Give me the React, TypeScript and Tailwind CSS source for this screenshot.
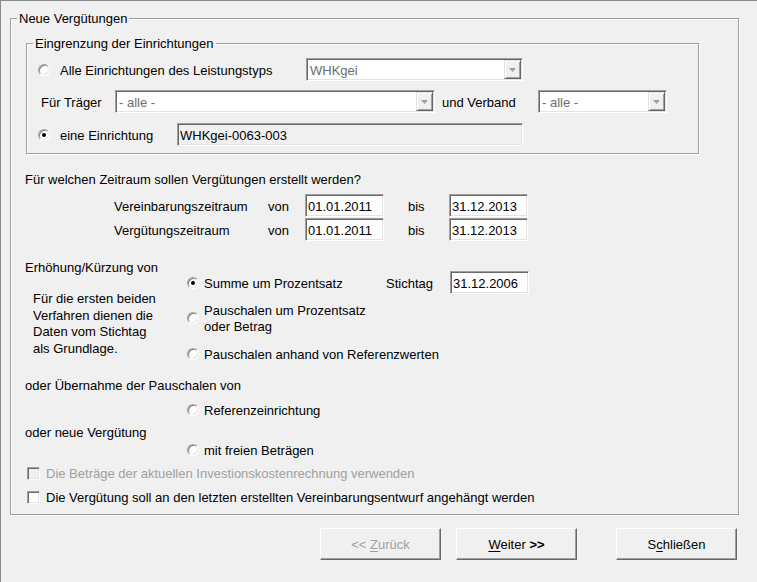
import React from "react";

// text is nudged down 1px without changing its layout box
const nudge = "pt-[1px] -mb-[1px]";

function Radio({ checked = false }: { checked?: boolean }) {
  return (
    <span className="relative inline-block w-[12px] h-[12px] shrink-0 rounded-full bg-white border border-[#a0a0a0] border-r-white border-b-white shadow-[inset_1px_1px_0_#8a8a8a,inset_-1px_-1px_0_#e3e3e3]">
      {checked && (
        <span className="absolute left-[3px] top-[3px] w-[4px] h-[4px] rounded-full bg-black" />
      )}
    </span>
  );
}

function Check({ disabled = false }: { disabled?: boolean }) {
  return (
    <span
      className={
        "inline-block w-[13px] h-[13px] shrink-0 border border-[#a0a0a0] border-r-white border-b-white shadow-[inset_1px_1px_0_#696969,inset_-1px_-1px_0_#e3e3e3] " +
        (disabled ? "bg-[#f0f0f0]" : "bg-white")
      }
    />
  );
}

function Edit({
  value,
  width,
  readOnly = false,
}: {
  value: string;
  width: string;
  readOnly?: boolean;
}) {
  return (
    <div
      className={
        "h-[23px] flex items-center pl-[2px] border border-[#a0a0a0] border-r-white border-b-white shadow-[inset_1px_1px_0_#696969,inset_-1px_-1px_0_#e3e3e3] " +
        width +
        (readOnly ? " bg-[#f0f0f0]" : " bg-white")
      }
    >
      <span className={nudge}>{value}</span>
    </div>
  );
}

function Combo({ value, width }: { value: string; width: string }) {
  return (
    <div
      className={
        "h-[23px] flex p-[1px] bg-white border border-[#a0a0a0] border-r-white border-b-white shadow-[inset_1px_1px_0_#696969,inset_-1px_-1px_0_#e3e3e3] " +
        width
      }
    >
      <span className="flex-1 flex items-center pl-[2px] text-[#6d6d6d]">
        <span className={nudge}>{value}</span>
      </span>
      <span className="w-[17px] flex items-center justify-center bg-[#f0f0f0] border border-[#e3e3e3] border-r-[#696969] border-b-[#696969] shadow-[inset_1px_1px_0_#fff,inset_-1px_-1px_0_#a0a0a0]">
        <svg width="7" height="4" viewBox="0 0 7 4">
          <polygon points="0,0 7,0 3.5,4" fill="#a0a0a0" />
        </svg>
      </span>
    </div>
  );
}

function Button({
  children,
  disabled = false,
  className = "",
}: {
  children: React.ReactNode;
  disabled?: boolean;
  className?: string;
}) {
  return (
    <div
      className={
        "w-[121px] h-[32px] flex items-center justify-center bg-[#f0f0f0] border border-white border-r-[#696969] border-b-[#696969] shadow-[inset_-1px_-1px_0_#a0a0a0] " +
        (disabled ? "text-[#a0a0a0] " : "text-black ") +
        className
      }
    >
      <span className={"whitespace-pre " + nudge}>{children}</span>
    </div>
  );
}

function Group({
  title,
  className,
  children,
}: {
  title: string;
  className: string;
  children?: React.ReactNode;
}) {
  return (
    <div
      className={
        "relative border border-[#a0a0a0] shadow-[1px_1px_0_#fff,inset_1px_1px_0_#fff] " +
        className
      }
    >
      <span className="absolute left-[6px] top-[-8px] px-[2px] bg-[#f0f0f0] leading-[16px]">
        {title}
      </span>
      {children}
    </div>
  );
}

export default function App() {
  return (
    <div className="w-[757px] h-[582px] overflow-hidden bg-[#f0f0f0] border-t border-l border-[#8a8a8a] text-[13px] leading-[16px] text-black font-['Liberation_Sans',Arial,sans-serif]">
      <Group title="Neue Vergütungen" className="ml-[9px] mt-[17px] w-[729px] h-[497px]">
        <Group title="Eingrenzung der Einrichtungen" className="ml-[15px] mt-[24px] w-[673px] h-[111px]">
          <div className="mt-[14px] h-[23px] flex items-center">
            <div className="w-[279px] flex items-center pl-[11px]">
              <Radio />
              <span className={"ml-[10px] " + nudge}>Alle Einrichtungen des Leistungstyps</span>
            </div>
            <Combo value="WHKgei" width="w-[217px]" />
          </div>
          <div className="mt-[9px] h-[23px] flex items-center">
            <span className={"w-[88px] pl-[14px] " + nudge}>Für Träger</span>
            <Combo value="- alle -" width="w-[320px]" />
            <span className={"w-[103px] pl-[7px] " + nudge}>und Verband</span>
            <Combo value="- alle -" width="w-[129px]" />
          </div>
          <div className="mt-[10px] h-[23px] flex items-center">
            <div className="w-[150px] flex items-center pl-[11px]">
              <Radio checked />
              <span className={"ml-[10px] " + nudge}>eine Einrichtung</span>
            </div>
            <Edit value="WHKgei-0063-003" width="w-[346px]" readOnly />
          </div>
        </Group>

        <div className={"mt-[17px] pl-[14px] " + nudge}>
          Für welchen Zeitraum sollen Vergütungen erstellt werden?
        </div>

        <div className="mt-[7px] flex flex-col gap-[1px]">
          {[
            ["Vereinbarungszeitraum", "01.01.2011", "31.12.2013"],
            ["Vergütungszeitraum", "01.01.2011", "31.12.2013"],
          ].map(([label, from, to]) => (
            <div key={label} className="h-[23px] flex items-center">
              <span className={"ml-[103px] w-[154px] " + nudge}>{label}</span>
              <span className={"w-[37px] " + nudge}>von</span>
              <Edit value={from} width="w-[79px]" />
              <span className={"w-[65px] pl-[24px] " + nudge}>bis</span>
              <Edit value={to} width="w-[79px]" />
            </div>
          ))}
        </div>

        <div className="mt-[18px] flex">
          <div className={"w-[176px] pl-[14px] " + nudge}>
            <div>Erhöhung/Kürzung von</div>
            <div className="mt-[15px] pl-[8px] leading-[16.67px]">
              Für die ersten beiden
              <br />
              Verfahren dienen die
              <br />
              Daten vom Stichtag
              <br />
              als Grundlage.
            </div>
          </div>
          <div className="mt-[12px]">
            <div className="h-[23px] flex items-center">
              <Radio checked />
              <span className={"ml-[5px] w-[182px] " + nudge}>Summe um Prozentsatz</span>
              <span className={"w-[64px] " + nudge}>Stichtag</span>
              <Edit value="31.12.2006" width="w-[79px]" />
            </div>
            <div className="mt-[8px] flex items-center">
              <Radio />
              <span className={"ml-[5px] " + nudge}>
                Pauschalen um Prozentsatz
                <br />
                oder Betrag
              </span>
            </div>
            <div className="mt-[12px] flex items-center">
              <Radio />
              <span className={"ml-[5px] " + nudge}>Pauschalen anhand von Referenzwerten</span>
            </div>
          </div>
        </div>

        <div className={"mt-[15px] pl-[14px] " + nudge}>oder Übernahme der Pauschalen von</div>
        <div className="mt-[9px] ml-[176px] flex items-center">
          <Radio />
          <span className={"ml-[5px] " + nudge}>Referenzeinrichtung</span>
        </div>
        <div className={"mt-[6px] pl-[14px] " + nudge}>oder neue Vergütung</div>
        <div className="mt-[2px] ml-[176px] flex items-center">
          <Radio />
          <span className={"ml-[5px] " + nudge}>mit freien Beträgen</span>
        </div>

        <div className="mt-[7px] ml-[16px] flex items-center">
          <Check disabled />
          <span className={"ml-[6px] text-[#a0a0a0] " + nudge}>
            Die Beträge der aktuellen Investionskostenrechnung verwenden
          </span>
        </div>
        <div className="mt-[8px] ml-[16px] flex items-center">
          <Check />
          <span className={"ml-[6px] " + nudge}>
            Die Vergütung soll an den letzten erstellten Vereinbarungsentwurf angehängt werden
          </span>
        </div>
      </Group>

      <div className="mt-[13px] ml-[319px] flex">
        <Button disabled>
          {"<< "}
          <span className="underline underline-offset-2">Z</span>urück
        </Button>
        <Button className="ml-[15px]">
          <span className="underline underline-offset-2">W</span>
          {"eiter "}
          <span className="font-bold">{">>"}</span>
        </Button>
        <Button className="ml-[39px]">
          S<span className="underline underline-offset-2">c</span>hließen
        </Button>
      </div>
    </div>
  );
}
